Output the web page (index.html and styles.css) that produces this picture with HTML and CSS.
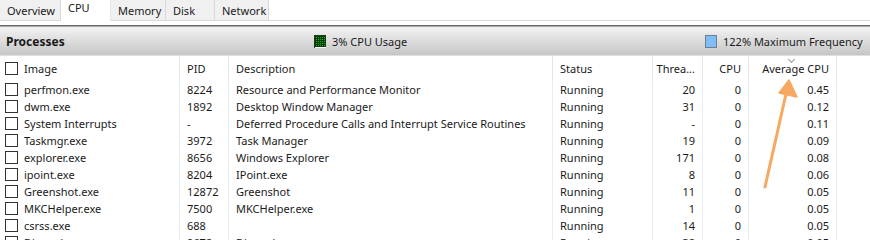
FILE: index.html
```html
<!DOCTYPE html>
<html>
<head>
<meta charset="utf-8">
<link rel="stylesheet" href="styles.css">
</head>
<body>
<div class="app">
  <div class="tabs">
    <div class="tab">Overview</div>
    <div class="tab active">CPU</div>
    <div class="tab">Memory</div>
    <div class="tab">Disk</div>
    <div class="tab">Network</div>
  </div>
  <div class="gap"></div>
  <div class="bar">
    <div class="bar-title">Processes</div>
    <div class="bar-usage">
      <svg class="ico" width="12" height="13" viewBox="0 0 12 13">
        <defs>
          <pattern id="dots" width="2" height="2" patternUnits="userSpaceOnUse">
            <rect width="2" height="2" fill="#0b3d0b"/>
            <rect width="1" height="1" fill="#19b319"/>
          </pattern>
        </defs>
        <rect x="0.5" y="0.5" width="11" height="12" fill="url(#dots)" stroke="#1c3a1c"/>
        <rect x="1" y="12" width="11" height="1" fill="#fff"/>
      </svg>
      <span>3% CPU Usage</span>
    </div>
    <div class="bar-freq">
      <svg class="ico" width="12" height="13" viewBox="0 0 12 13">
        <rect x="0.5" y="0.5" width="11" height="12" fill="#7fbdf7" stroke="#6f7d8c"/>
      </svg>
      <span>122% Maximum Frequency</span>
    </div>
  </div>
  <div class="grid">
    <div class="row head">
      <div class="c img"><span class="cb"></span>Image</div>
      <div class="c">PID</div>
      <div class="c">Description</div>
      <div class="c">Status</div>
      <div class="c num">Threa...</div>
      <div class="c num">CPU</div>
      <div class="c num sorted">Average CPU<span class="chev"></span></div>
      <div class="c last"></div>
    </div>
    <div class="row"><div class="c img"><span class="cb"></span>perfmon.exe</div><div class="c">8224</div><div class="c">Resource and Performance Monitor</div><div class="c">Running</div><div class="c num">20</div><div class="c num">0</div><div class="c num">0.45</div><div class="c last"></div></div>
    <div class="row"><div class="c img"><span class="cb"></span>dwm.exe</div><div class="c">1892</div><div class="c">Desktop Window Manager</div><div class="c">Running</div><div class="c num">31</div><div class="c num">0</div><div class="c num">0.12</div><div class="c last"></div></div>
    <div class="row"><div class="c img"><span class="cb"></span>System Interrupts</div><div class="c">-</div><div class="c">Deferred Procedure Calls and Interrupt Service Routines</div><div class="c">Running</div><div class="c num">-</div><div class="c num">0</div><div class="c num">0.11</div><div class="c last"></div></div>
    <div class="row"><div class="c img"><span class="cb"></span>Taskmgr.exe</div><div class="c">3972</div><div class="c">Task Manager</div><div class="c">Running</div><div class="c num">19</div><div class="c num">0</div><div class="c num">0.09</div><div class="c last"></div></div>
    <div class="row"><div class="c img"><span class="cb"></span>explorer.exe</div><div class="c">8656</div><div class="c">Windows Explorer</div><div class="c">Running</div><div class="c num">171</div><div class="c num">0</div><div class="c num">0.08</div><div class="c last"></div></div>
    <div class="row"><div class="c img"><span class="cb"></span>ipoint.exe</div><div class="c">8204</div><div class="c">IPoint.exe</div><div class="c">Running</div><div class="c num">8</div><div class="c num">0</div><div class="c num">0.06</div><div class="c last"></div></div>
    <div class="row"><div class="c img"><span class="cb"></span>Greenshot.exe</div><div class="c">12872</div><div class="c">Greenshot</div><div class="c">Running</div><div class="c num">11</div><div class="c num">0</div><div class="c num">0.05</div><div class="c last"></div></div>
    <div class="row"><div class="c img"><span class="cb"></span>MKCHelper.exe</div><div class="c">7500</div><div class="c">MKCHelper.exe</div><div class="c">Running</div><div class="c num">1</div><div class="c num">0</div><div class="c num">0.05</div><div class="c last"></div></div>
    <div class="row"><div class="c img"><span class="cb"></span>csrss.exe</div><div class="c">688</div><div class="c"></div><div class="c">Running</div><div class="c num">14</div><div class="c num">0</div><div class="c num">0.05</div><div class="c last"></div></div>
    <div class="row"><div class="c img"><span class="cb"></span>Discord.exe</div><div class="c">9672</div><div class="c">Discord</div><div class="c">Running</div><div class="c num">32</div><div class="c num">0</div><div class="c num">0.05</div><div class="c last"></div></div>
  </div>
  <svg class="arrow" width="870" height="240" viewBox="0 0 870 240">
    <line x1="765" y1="187" x2="786" y2="94" stroke="#f7a860" stroke-width="3" stroke-linecap="round"/>
    <polygon points="789,80 797,97 779,93" fill="#f7a860" stroke="#f7a860" stroke-width="1.5" stroke-linejoin="round"/>
  </svg>
</div>
</body>
</html>
```
FILE: styles.css
```css
* { box-sizing: border-box; }
html, body { margin: 0; padding: 0; background: #fff; }
body {
  font-family: "Noto Sans", "Open Sans", sans-serif;
  font-size: 11px;
  color: #1a1a1a;
  width: 870px;
  height: 240px;
  overflow: hidden;
}
.app { position: relative; width: 870px; height: 240px; overflow: hidden; }

.tabs {
  display: flex;
  height: 21px;
  border-bottom: 1px solid #d9d9d9;
}
.tab {
  background: #f0f0f0;
  border-right: 1px solid #d9d9d9;
  padding: 0 7px;
  line-height: 21px;
  color: #1a1a1a;
}
.tab:nth-child(1) { width: 61px; }
.tab:nth-child(2) { width: 50px; }
.tab:nth-child(3) { width: 55px; }
.tab:nth-child(4) { width: 49px; }
.tab:nth-child(5) { width: 54px; }
.tab.active {
  background: #fff;
  line-height: 16px;
  margin-bottom: -1px;
  border-right-color: #e6e6e6;
}
.gap { height: 4px; }

.bar {
  display: flex;
  align-items: center;
  height: 31px;
  border-top: 1px solid #6b6b6b;
  box-shadow: inset 0 1px 0 #a8a8a8;
  background: linear-gradient(#f3f3f3, #e2e2e2 40%, #c6c6c6);
  border-bottom: 1px solid #e0e0e0;
  padding-top: 1px;
  white-space: nowrap;
}
.bar-title {
  font-weight: bold;
  font-size: 12px;
  padding-left: 6px;
  width: 314px;
}
.bar-usage, .bar-freq { display: flex; align-items: center; gap: 6px; }
.bar-usage { width: 391px; }
.ico { display: block; }

.grid { display: flex; flex-direction: column; }
.row {
  display: grid;
  grid-template-columns: 180px 49px 324px 100px 50px 46px 88px 1fr;
  height: 17px;
  line-height: 17px;
}
.row.head { height: 25px; line-height: 25px; }
.c {
  border-right: 1px solid #e4ecf6;
  padding-left: 7px;
  white-space: nowrap;
  overflow: hidden;
}
.head .c { border-right-color: #e5e5e5; }
.c.last { border-right: 0; }
.c.num { text-align: right; padding-left: 0; padding-right: 7px; }
.c.img { display: flex; align-items: center; padding-left: 5px; gap: 6px; }
.cb {
  width: 13px;
  height: 13px;
  border: 1px solid #333;
  background: #fff;
  flex: none;
}
.sorted { position: relative; }
.chev {
  position: absolute;
  left: 40px;
  top: 1px;
  width: 5px;
  height: 5px;
  border-right: 1px solid #999;
  border-bottom: 1px solid #999;
  transform: rotate(45deg);
}

.arrow { position: absolute; left: 0; top: 0; pointer-events: none; }
```
